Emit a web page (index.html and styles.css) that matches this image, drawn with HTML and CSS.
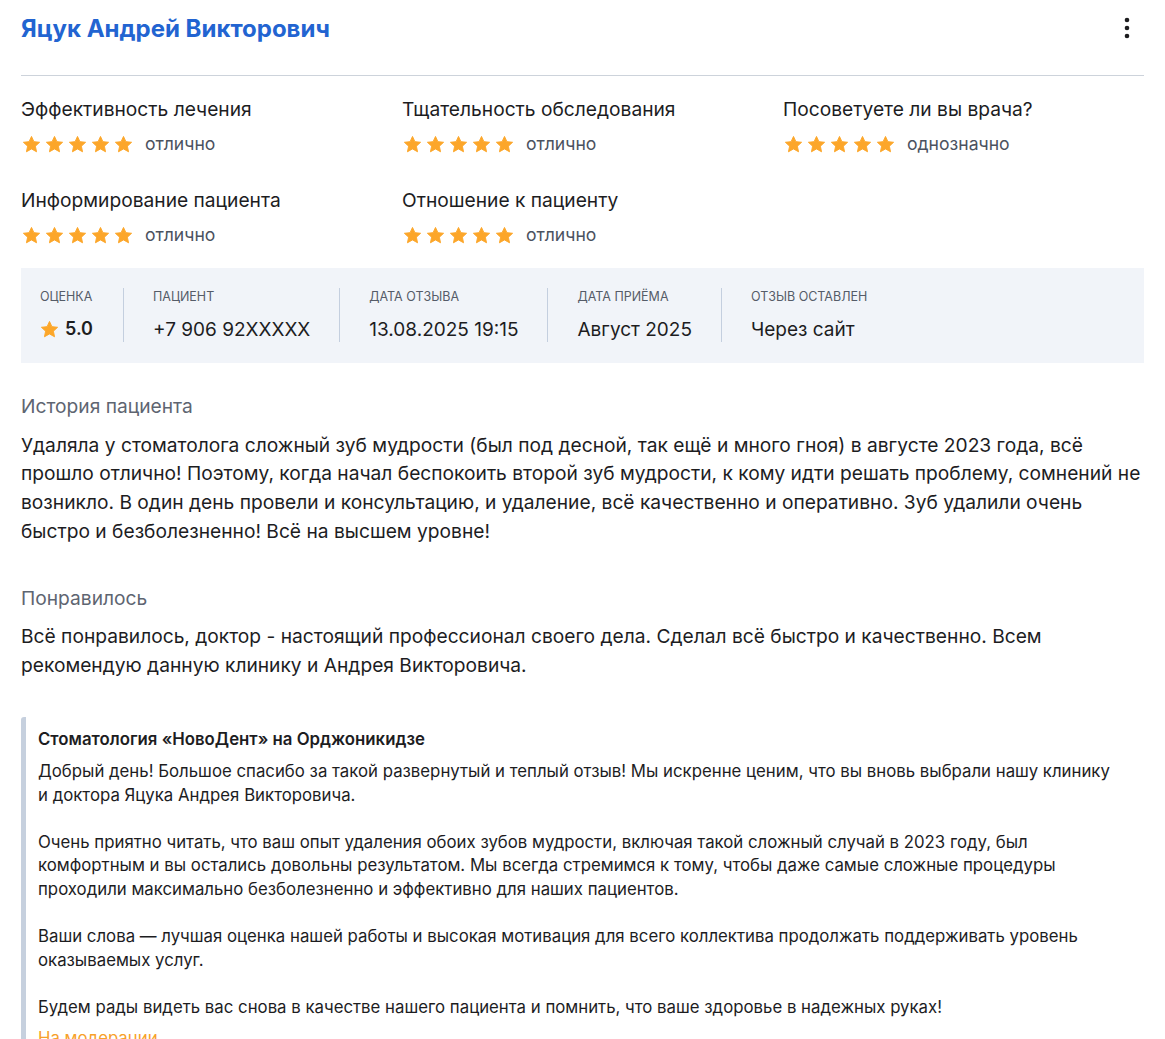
FILE: index.html
```html
<!DOCTYPE html>
<html lang="ru">
<head>
  <meta charset="UTF-8" />
  <title>Отзыв — Яцук Андрей Викторович</title>
  <link rel="stylesheet" href="styles.css">
</head>
<body>
  <svg width="0" height="0" style="position:absolute">
    <defs>
      <symbol id="star" viewBox="0 0 24 24">
        <path d="M12 1.8l3.05 6.6 7.2.8-5.35 4.9 1.48 7.1L12 17.6l-6.38 3.6 1.48-7.1L1.75 9.2l7.2-.8z" stroke-linejoin="round" stroke="#fca62a" stroke-width="1.2" fill="#fca62a"/>
      </symbol>
    </defs>
  </svg>

  <div class="review">

    <!-- Header -->
    <div class="head">
      <a class="doctor" href="#">Яцук Андрей Викторович</a>
      <button class="more" aria-label="Ещё">
        <svg width="6" height="22" viewBox="0 0 6 22"><circle cx="3" cy="3" r="2.3"/><circle cx="3" cy="11" r="2.3"/><circle cx="3" cy="19" r="2.3"/></svg>
      </button>
    </div>

    <!-- Ratings -->
    <div class="ratings">
      <div class="rate">
        <div class="rate-name">Эффективность лечения</div>
        <div class="rate-val">
          <span class="stars"><svg><use href="#star"/></svg><svg><use href="#star"/></svg><svg><use href="#star"/></svg><svg><use href="#star"/></svg><svg><use href="#star"/></svg></span>
          отлично
        </div>
      </div>
      <div class="rate">
        <div class="rate-name">Тщательность обследования</div>
        <div class="rate-val">
          <span class="stars"><svg><use href="#star"/></svg><svg><use href="#star"/></svg><svg><use href="#star"/></svg><svg><use href="#star"/></svg><svg><use href="#star"/></svg></span>
          отлично
        </div>
      </div>
      <div class="rate">
        <div class="rate-name">Посоветуете ли вы врача?</div>
        <div class="rate-val">
          <span class="stars"><svg><use href="#star"/></svg><svg><use href="#star"/></svg><svg><use href="#star"/></svg><svg><use href="#star"/></svg><svg><use href="#star"/></svg></span>
          однозначно
        </div>
      </div>
      <div class="rate">
        <div class="rate-name">Информирование пациента</div>
        <div class="rate-val">
          <span class="stars"><svg><use href="#star"/></svg><svg><use href="#star"/></svg><svg><use href="#star"/></svg><svg><use href="#star"/></svg><svg><use href="#star"/></svg></span>
          отлично
        </div>
      </div>
      <div class="rate">
        <div class="rate-name">Отношение к пациенту</div>
        <div class="rate-val">
          <span class="stars"><svg><use href="#star"/></svg><svg><use href="#star"/></svg><svg><use href="#star"/></svg><svg><use href="#star"/></svg><svg><use href="#star"/></svg></span>
          отлично
        </div>
      </div>
    </div>

    <!-- Meta info -->
    <div class="meta">
      <div class="meta-item">
        <div class="meta-label">Оценка</div>
        <div class="meta-value score"><svg class="score-star"><use href="#star"/></svg>5.0</div>
      </div>
      <div class="meta-item">
        <div class="meta-label">Пациент</div>
        <div class="meta-value">+7 906 92XXXXX</div>
      </div>
      <div class="meta-item">
        <div class="meta-label">Дата отзыва</div>
        <div class="meta-value">13.08.2025 19:15</div>
      </div>
      <div class="meta-item">
        <div class="meta-label">Дата приёма</div>
        <div class="meta-value">Август 2025</div>
      </div>
      <div class="meta-item">
        <div class="meta-label">Отзыв оставлен</div>
        <div class="meta-value">Через сайт</div>
      </div>
    </div>

    <!-- Text -->
    <div class="section">
      <div class="section-title">История пациента</div>
      <p class="section-text">Удаляла у стоматолога сложный зуб мудрости (был под десной, так ещё и много гноя) в августе 2023 года, всё прошло отлично! Поэтому, когда начал беспокоить второй зуб мудрости, к кому идти решать проблему, сомнений не возникло. В один день провели и консультацию, и удаление, всё качественно и оперативно. Зуб удалили очень быстро и безболезненно! Всё на высшем уровне!</p>
    </div>

    <div class="section">
      <div class="section-title">Понравилось</div>
      <p class="section-text">Всё понравилось, доктор - настоящий профессионал своего дела. Сделал всё быстро и качественно. Всем рекомендую данную клинику и Андрея Викторовича.</p>
    </div>

    <!-- Clinic answer -->
    <div class="answer">
      <div class="answer-title">Стоматология «НовоДент» на Орджоникидзе</div>
      <p>Добрый день! Большое спасибо за такой развернутый и теплый отзыв! Мы искренне ценим, что вы вновь выбрали нашу клинику и доктора Яцука Андрея Викторовича.</p>
      <p>Очень приятно читать, что ваш опыт удаления обоих зубов мудрости, включая такой сложный случай в 2023 году, был комфортным и вы остались довольны результатом. Мы всегда стремимся к тому, чтобы даже самые сложные процедуры проходили максимально безболезненно и эффективно для наших пациентов.</p>
      <p>Ваши слова — лучшая оценка нашей работы и высокая мотивация для всего коллектива продолжать поддерживать уровень оказываемых услуг.</p>
      <p>Будем рады видеть вас снова в качестве нашего пациента и помнить, что ваше здоровье в надежных руках!</p>
      <div class="status">На модерации</div>
    </div>

  </div>
</body>
</html>
```

FILE: styles.css
```css
body {
  margin: 0;
  background: #fff;
  color: #1d1d1f;
  font-family: Inter, "Noto Sans", sans-serif;
}
.review {
  padding: 0 21px;
}
.head {
  display: flex;
  align-items: flex-start;
  justify-content: space-between;
  padding: 13px 0 30px;
  border-bottom: 1px solid #cdd3db;
  margin-bottom: 21px;
}
.doctor {
  color: #2264d1;
  font-size: 24px;
  line-height: 32px;
  font-weight: 700;
  text-decoration: none;
}
.more {
  border: 0;
  background: none;
  padding: 0 14px 0 0;
  margin-top: 4px;
  cursor: pointer;
}
.more svg {
  display: block;
  fill: #1d1d1f;
}

.ratings {
  display: grid;
  grid-template-columns: repeat(3, 381px);
  row-gap: 32px;
}
.rate-name {
  font-size: 19.2px;
  line-height: 24px;
  color: #1d1d1f;
}
.rate-val {
  display: flex;
  align-items: center;
  gap: 12px;
  margin-top: 11px;
  font-size: 17.6px;
  line-height: 24px;
  color: #4b5260;
}
.stars {
  display: flex;
  gap: 4px;
  margin-left: 1px;
}
.stars svg {
  width: 19px;
  height: 19px;
}

.meta {
  display: flex;
  align-items: stretch;
  background: #f1f4f9;
  margin-top: 21px;
  padding: 20px 0 21px 19px;
}
.meta-item {
  padding: 0 29px;
  border-left: 1px solid #c4cfdf;
}
.meta-item:first-child {
  border-left: 0;
  padding-left: 0;
  padding-right: 30px;
}
.meta-label {
  font-size: 12.5px;
  line-height: 18px;
  color: #555c68;
  text-transform: uppercase;
}
.meta-value {
  font-size: 19px;
  line-height: 24px;
  margin-top: 12px;
  color: #1d1d1f;
}
.meta-value.score {
  display: flex;
  align-items: center;
  gap: 6px;
  font-weight: 600;
  font-size: 18px;
  margin-top: 11px;
}
.score-star {
  width: 19px;
  height: 19px;
}

.section {
  margin-top: 31px;
}
.section + .section {
  margin-top: 40px;
}
.section-title {
  font-size: 19.2px;
  line-height: 24px;
  color: #5e6571;
}
.section-text {
  margin: 12.6px 0 0;
  font-size: 19.2px;
  line-height: 28.8px;
  color: #1d1d1f;
}

.answer {
  margin-top: 37px;
  border-left: 5px solid #c6d0de;
  border-radius: 3px 0 0 0;
  padding: 11px 26px 0 12px;
  font-size: 16.8px;
  line-height: 23.6px;
  color: #1d1d1f;
}
.answer-title {
  font-weight: 600;
  font-size: 16.8px;
  line-height: 22px;
  margin-bottom: 10px;
}
.answer p {
  margin: 0 0 23.6px;
}
.answer p:last-of-type {
  margin-bottom: 6px;
}
.status {
  color: #f7a12a;
  line-height: 24px;
}
```
